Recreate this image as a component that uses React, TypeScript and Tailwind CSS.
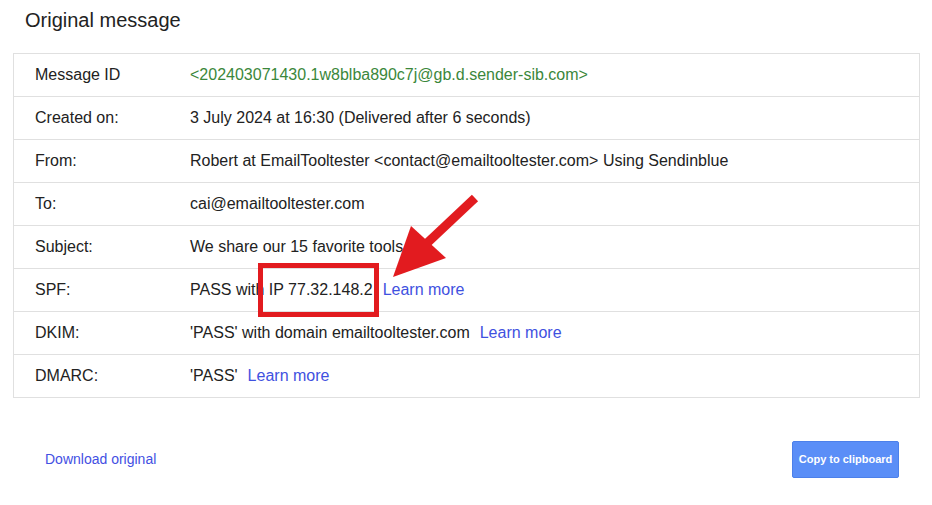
import type { ReactNode } from "react";

type Row = { label: string; value: ReactNode };

function LearnMore() {
    return <a className="ml-[10px] text-[#3f51e0] no-underline cursor-pointer">Learn more</a>;
}

const rows: Row[] = [
    { label: "Message ID", value: <span className="text-[#3b873b]">&lt;202403071430.1w8blba890c7j@gb.d.sender-sib.com&gt;</span> },
    { label: "Created on:", value: "3 July 2024 at 16:30 (Delivered after 6 seconds)" },
    { label: "From:", value: "Robert at EmailTooltester <contact@emailtooltester.com> Using Sendinblue" },
    { label: "To:", value: "cai@emailtooltester.com" },
    { label: "Subject:", value: "We share our 15 favorite tools" },
    { label: "SPF:", value: <>PASS with IP 77.32.148.2<LearnMore /></> },
    { label: "DKIM:", value: <>'PASS' with domain emailtooltester.com<LearnMore /></> },
    { label: "DMARC:", value: <>'PASS'<LearnMore /></> },
];

export default function App() {
    return (
        <div className="relative w-[932px] h-[505px] bg-white text-[#222] font-['Liberation_Sans',Arial,sans-serif] overflow-hidden">
            <h1 className="pt-[8px] pl-[25px] text-[20px] leading-[24px] font-normal">Original message</h1>

            <div className="mt-[21px] ml-[13px] mr-[12px] border border-[#e0e0e0]">
                {rows.map((r, i) => (
                    <div
                        key={r.label}
                        className={`flex items-center text-[16px] ${i < rows.length - 1 ? "h-[43px] border-b border-[#e0e0e0]" : "h-[42px]"}`}
                    >
                        <div className="w-[176px] pl-[21px] shrink-0">{r.label}</div>
                        <div className="whitespace-nowrap">{r.value}</div>
                    </div>
                ))}
            </div>

            <div className="flex items-center justify-between mt-[43px] pl-[45px] pr-[33px]">
                <a className="text-[14px] text-[#4350e3] cursor-pointer">Download original</a>
                <button className="w-[107px] h-[37px] rounded-[2px] bg-[#5a8ef7] border border-[#4c80ea] text-white text-[11px] font-bold">
                    Copy to clipboard
                </button>
            </div>

            {/* annotation overlay */}
            <div className="absolute left-[258px] top-[263px] w-[121px] h-[54px] border-[5px] border-[#e21b1f]" />
            <svg className="absolute left-0 top-0 pointer-events-none" width="932" height="505">
                <line x1="475" y1="198" x2="425" y2="245" stroke="#e21b1f" strokeWidth="9" />
                <polygon points="411,226 446,258 393,277" fill="#e21b1f" />
            </svg>
        </div>
    );
}
